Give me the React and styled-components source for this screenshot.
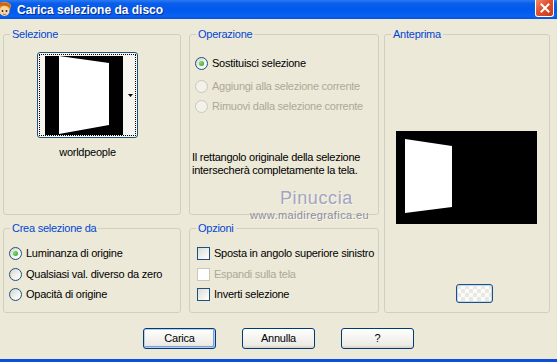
import styled, { createGlobalStyle } from 'styled-components';

const GlobalStyle = createGlobalStyle`
  html, body {
    margin: 0;
    padding: 0;
    background: #ECE9D8;
  }
  body {
    font-family: "Liberation Sans", Arial, sans-serif;
    font-size: 11px;
    letter-spacing: -0.25px;
    color: #000;
  }
`;

const Window = styled.div`
  position: relative;
  width: 557px;
  height: 362px;
  box-sizing: border-box;
  display: flex;
  flex-direction: column;
  background: #ECE9D8;
  border-bottom: 3px solid #0B4FDC;
  overflow: hidden;
`;

const TitleBar = styled.div`
  height: 19px;
  display: flex;
  align-items: center;
  background: linear-gradient(to bottom, #2A7BF2 0%, #0A5EEA 18%, #0058EE 50%, #0A62F2 85%, #0552E0 100%);
  color: #fff;
`;

const TitleIcon = styled.svg`
  width: 14px;
  height: 17px;
  margin-left: -2px;
  flex: none;
`;

const TitleText = styled.div`
  margin-left: 5px;
  font-weight: bold;
  font-size: 12px;
  letter-spacing: 0;
  text-shadow: 1px 1px 0 #0A2A8A;
  flex: 1;
`;

const CloseButton = styled.div`
  width: 19px;
  height: 17px;
  margin: -2px 3px 0 0;
  box-sizing: border-box;
  border: 1px solid #fff;
  border-top: none;
  border-radius: 0 0 3px 3px;
  background: linear-gradient(135deg, #F08A6A 0%, #E0502C 45%, #C8381A 100%);
  display: flex;
  align-items: center;
  justify-content: center;
`;

const Body = styled.div`
  flex: 1;
  display: flex;
  flex-direction: column;
  padding: 9px 0 0 3px;
`;

const Columns = styled.div`
  display: flex;
  align-items: flex-start;
`;

const Column = styled.div`
  width: ${p => p.$w}px;
  margin-right: ${p => p.$mr || 0}px;
  display: flex;
  flex-direction: column;
  gap: 7px;
`;

const Group = styled.fieldset`
  margin: 0;
  padding: 0 0 0 ${p => p.$pl || 0}px;
  min-width: 0;
  height: ${p => p.$h}px;
  box-sizing: border-box;
  border: 1px solid #D0D0BF;
  border-radius: 3px;
  display: flex;
  flex-direction: column;
  align-items: flex-start;
`;

const Legend = styled.legend`
  margin-left: ${p => 6 - (p.$pl || 0)}px;
  padding: 0 2px;
  line-height: 13px;
  color: #0046D5;
`;

const ThumbWrap = styled.div`
  margin: 11px 0 0 33px;
  width: 101px;
  display: flex;
  flex-direction: column;
  align-items: center;
`;

const ThumbButton = styled.div`
  position: relative;
  width: 101px;
  height: 86px;
  box-sizing: border-box;
  border: 1px solid #1C5180;
  border-radius: 3px;
  background: #F6F5F0;
  display: flex;
  align-items: center;
  justify-content: center;
`;

const FocusRect = styled.div`
  width: 97px;
  height: 82px;
  box-sizing: border-box;
  border: 1px dotted #000;
  position: relative;
`;

const DropArrow = styled.svg`
  position: absolute;
  right: 2px;
  top: 39px;
  width: 5px;
  height: 3px;
`;

const Caption = styled.div`
  margin-top: 8px;
  line-height: 13px;
`;

const Option = styled.div`
  display: flex;
  align-items: center;
  gap: 4px;
  height: 13px;
  line-height: 13px;
  margin-top: ${p => p.$mt || 0}px;
  margin-left: ${p => p.$ml || 0}px;
  color: ${p => (p.$disabled ? '#ACA899' : '#000')};
  white-space: nowrap;
`;

const Radio = styled.span`
  width: 13px;
  height: 13px;
  flex: none;
  box-sizing: border-box;
  border-radius: 50%;
  border: 1px solid ${p => (p.$disabled ? '#CAC8BB' : '#1C5180')};
  background: ${p => (p.$disabled ? '#F3F2EA' : 'linear-gradient(135deg, #D6D4C8 0%, #F4F3EE 60%, #FFFFFF 100%)')};
  display: flex;
  align-items: center;
  justify-content: center;
  &::after {
    content: '';
    width: 5px;
    height: 5px;
    border-radius: 50%;
    background: ${p => (p.$checked ? 'radial-gradient(circle at 35% 35%, #7BE07A, #21A121)' : 'transparent')};
  }
`;

const Check = styled.span`
  width: 13px;
  height: 13px;
  flex: none;
  box-sizing: border-box;
  border: 1px solid ${p => (p.$disabled ? '#CAC8BB' : '#1C5180')};
  background: ${p => (p.$disabled ? '#FFFFFF' : 'linear-gradient(135deg, #DCDCD7 0%, #F2F2EE 60%, #FFFFFF 100%)')};
`;

const Note = styled.p`
  margin: 38px 0 0 0;
  line-height: 12.5px;
`;

const Preview = styled.svg`
  margin: 90px 0 0 11px;
  width: 141px;
  height: 93px;
  display: block;
`;

const SmallButton = styled.div`
  margin: 60px 0 0 71px;
  width: 37px;
  height: 19px;
  box-sizing: border-box;
  border: 1px solid #1C5180;
  border-radius: 3px;
  background:
    repeating-conic-gradient(#FBFBF8 0% 25%, #E9E8E2 0% 50%) 0 0 / 8px 8px;
  box-shadow: inset 0 0 0 1px #C6D6F2;
`;

const ButtonRow = styled.div`
  display: flex;
  justify-content: center;
  gap: 26px;
  margin: 15px 3px 0 0;
`;

const Button = styled.div`
  width: 73px;
  height: 21px;
  box-sizing: border-box;
  border: 1px solid #003C74;
  border-radius: 3px;
  background: linear-gradient(to bottom, #FFFFFF 0%, #F6F5F1 40%, #ECEBE5 85%, #D6D0C5 100%);
  box-shadow: ${p => (p.$default ? 'inset 0 0 0 1px #B8CCF0, inset -1px -1px 0 1px #7B9CE0' : 'none')};
  display: flex;
  align-items: center;
  justify-content: center;
  line-height: 13px;
`;

const Watermark = styled.div`
  position: absolute;
  left: ${p => p.$x}px;
  top: ${p => p.$y}px;
  font-size: ${p => p.$size}px;
  letter-spacing: ${p => p.$ls}px;
  color: ${p => p.$color};
  line-height: 1;
  white-space: nowrap;
  text-shadow: 1px 1px 0 rgba(255, 255, 255, 0.6);
  pointer-events: none;
`;

const App = () => {
  return (
    <Window>
      <GlobalStyle />
      <TitleBar>
        <TitleIcon viewBox="0 0 14 17">
          <path d="M0 3 C3 0 10 0 13 4 L12 9 L1 9 Z" fill="#E8962A" />
          <ellipse cx="6.5" cy="10" rx="5" ry="5" fill="#F8D6A6" />
          <path d="M1 6 C4 4 9 4 12 7 L12 4 C8 1 3 1 1 3 Z" fill="#C8661C" />
          <circle cx="4.5" cy="10" r="0.9" fill="#3A2010" />
          <circle cx="8.5" cy="10" r="0.9" fill="#3A2010" />
          <path d="M5 13 Q6.5 14 8 13" stroke="#B04020" strokeWidth="0.8" fill="none" />
        </TitleIcon>
        <TitleText>Carica selezione da disco</TitleText>
        <CloseButton>
          <svg width="10" height="10" viewBox="0 0 10 10">
            <path d="M1.5 1.5 L8.5 8.5 M8.5 1.5 L1.5 8.5" stroke="#fff" strokeWidth="2" strokeLinecap="square" />
          </svg>
        </CloseButton>
      </TitleBar>

      <Body>
        <Columns>
          <Column $w={178} $mr={8}>
            <Group $h={187}>
              <Legend>Selezione</Legend>
              <ThumbWrap>
                <ThumbButton>
                  <FocusRect>
                    <svg width="95" height="80" viewBox="0 0 95 80" style={{ display: 'block' }}>
                      <rect x="5" y="1" width="78" height="79" fill="#000" />
                      <polygon points="19,1 69,8 69,70 19,79" fill="#fff" />
                    </svg>
                    <DropArrow viewBox="0 0 5 3">
                      <polygon points="0,0 5,0 2.5,3" fill="#000" />
                    </DropArrow>
                  </FocusRect>
                </ThumbButton>
                <Caption>worldpeople</Caption>
              </ThumbWrap>
            </Group>
            <Group $h={91} $pl={5}>
              <Legend $pl={5}>Crea selezione da</Legend>
              <Option $mt={12}>
                <Radio $checked />
                Luminanza di origine
              </Option>
              <Option $mt={8}>
                <Radio />
                Qualsiasi val. diverso da zero
              </Option>
              <Option $mt={7}>
                <Radio />
                Opacità di origine
              </Option>
            </Group>
          </Column>

          <Column $w={190} $mr={5}>
            <Group $h={187} $pl={2}>
              <Legend $pl={2}>Operazione</Legend>
              <Option $mt={16} $ml={3}>
                <Radio $checked />
                Sostituisci selezione
              </Option>
              <Option $mt={10} $ml={3} $disabled>
                <Radio $disabled />
                Aggiungi alla selezione corrente
              </Option>
              <Option $mt={7} $ml={3} $disabled>
                <Radio $disabled />
                Rimuovi dalla selezione corrente
              </Option>
              <Note>
                Il rettangolo originale della selezione
                <br />
                intersecherà completamente la tela.
              </Note>
            </Group>
            <Group $h={91} $pl={7}>
              <Legend $pl={7}>Opzioni</Legend>
              <Option $mt={12}>
                <Check />
                Sposta in angolo superiore sinistro
              </Option>
              <Option $mt={8} $disabled>
                <Check $disabled />
                Espandi sulla tela
              </Option>
              <Option $mt={7}>
                <Check />
                Inverti selezione
              </Option>
            </Group>
          </Column>

          <Column $w={166}>
            <Group $h={285}>
              <Legend>Anteprima</Legend>
              <Preview viewBox="0 0 141 93">
                <rect width="141" height="93" fill="#000" />
                <polygon points="9,8 56,15 56,76 9,82" fill="#fff" />
              </Preview>
              <SmallButton />
            </Group>
          </Column>
        </Columns>

        <ButtonRow>
          <Button $default>Carica</Button>
          <Button>Annulla</Button>
          <Button>?</Button>
        </ButtonRow>
      </Body>

      <Watermark $x={280} $y={189} $size={18} $ls={0.6} $color="#A4A4BE">
        Pinuccia
      </Watermark>
      <Watermark $x={250} $y={210} $size={11} $ls={0.4} $color="#8E8E9E">
        www.maidiregrafica.eu
      </Watermark>
    </Window>
  );
};

export default App;
